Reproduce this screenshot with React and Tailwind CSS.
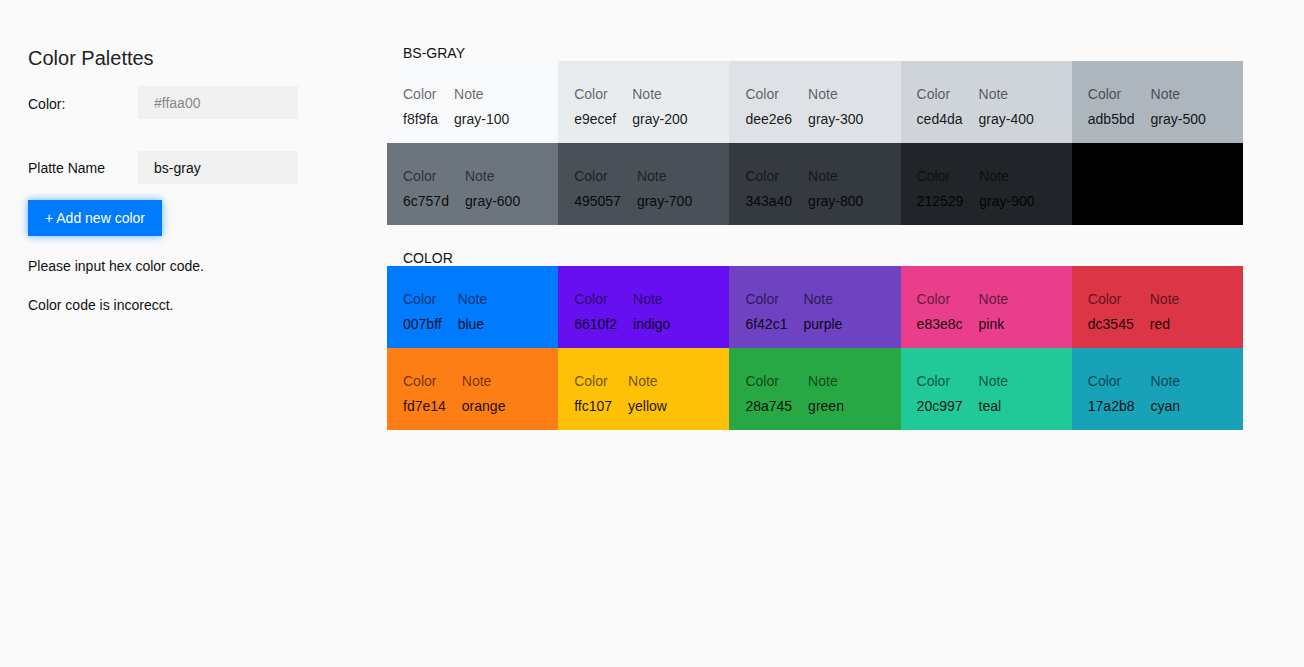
import React from "react";

const palettes = [
  {
    name: "BS-GRAY",
    colors: [
      { hex: "f8f9fa", note: "gray-100" },
      { hex: "e9ecef", note: "gray-200" },
      { hex: "dee2e6", note: "gray-300" },
      { hex: "ced4da", note: "gray-400" },
      { hex: "adb5bd", note: "gray-500" },
      { hex: "6c757d", note: "gray-600" },
      { hex: "495057", note: "gray-700" },
      { hex: "343a40", note: "gray-800" },
      { hex: "212529", note: "gray-900" },
      { hex: "000000", note: null },
    ],
  },
  {
    name: "COLOR",
    colors: [
      { hex: "007bff", note: "blue" },
      { hex: "6610f2", note: "indigo" },
      { hex: "6f42c1", note: "purple" },
      { hex: "e83e8c", note: "pink" },
      { hex: "dc3545", note: "red" },
      { hex: "fd7e14", note: "orange" },
      { hex: "ffc107", note: "yellow" },
      { hex: "28a745", note: "green" },
      { hex: "20c997", note: "teal" },
      { hex: "17a2b8", note: "cyan" },
    ],
  },
];

const Swatch = ({ hex, note }) => (
  <div
    className="h-[82px] pl-4 pt-[23px]"
    style={{ backgroundColor: `#${hex}` }}
  >
    {note && (
      <div className="flex gap-4 text-[14px] leading-[20px]">
        <div className="flex flex-col gap-[5px]">
          <span className="text-black/60">Color</span>
          <span className="text-black/90">{hex}</span>
        </div>
        <div className="flex flex-col gap-[5px]">
          <span className="text-black/60">Note</span>
          <span className="text-black/90">{note}</span>
        </div>
      </div>
    )}
  </div>
);

export default function App() {
  return (
    <div
      className="min-h-screen bg-[#fafafa] flex text-[14px] text-[#111]"
      style={{ fontFamily: '"Liberation Sans", Arial, sans-serif' }}
    >
      {/* left form */}
      <div className="w-[387px] pl-[28px] pt-[46px] shrink-0">
        <h1 className="text-[20px] leading-[24px] font-normal text-[#222]">Color Palettes</h1>

        <div className="flex items-center mt-[16px]">
          <label className="w-[110px] mt-[3px]">Color:</label>
          <input
            type="text"
            placeholder="#ffaa00"
            className="w-[160px] h-[33px] bg-[#f1f1f1] px-4 outline-none placeholder:text-[#888]"
          />
        </div>

        <div className="flex items-center mt-[32px]">
          <label className="w-[110px] mt-[2px]">Platte Name</label>
          <input
            type="text"
            defaultValue="bs-gray"
            className="w-[160px] h-[33px] bg-[#f1f1f1] px-4 outline-none"
          />
        </div>

        <button className="mt-[16px] w-[134px] h-[36px] bg-[#007bff] text-white shadow-[0_0_8px_rgba(0,123,255,0.6)]">
          + Add new color
        </button>

        <p className="mt-[20px] leading-[20px]">Please input hex color code.</p>
        <p className="mt-[19px] leading-[20px]">Color code is incorecct.</p>
      </div>

      {/* palettes */}
      <div className="w-[856px] pt-[45px]">
        {palettes.map((p, i) => (
          <div key={p.name} className={i > 0 ? "mt-[25px]" : ""}>
            <div className="pl-4 leading-[16px]">{p.name}</div>
            <div className="grid grid-cols-5">
              {p.colors.map((c) => (
                <Swatch key={c.hex} hex={c.hex} note={c.note} />
              ))}
            </div>
          </div>
        ))}
      </div>
    </div>
  );
}
